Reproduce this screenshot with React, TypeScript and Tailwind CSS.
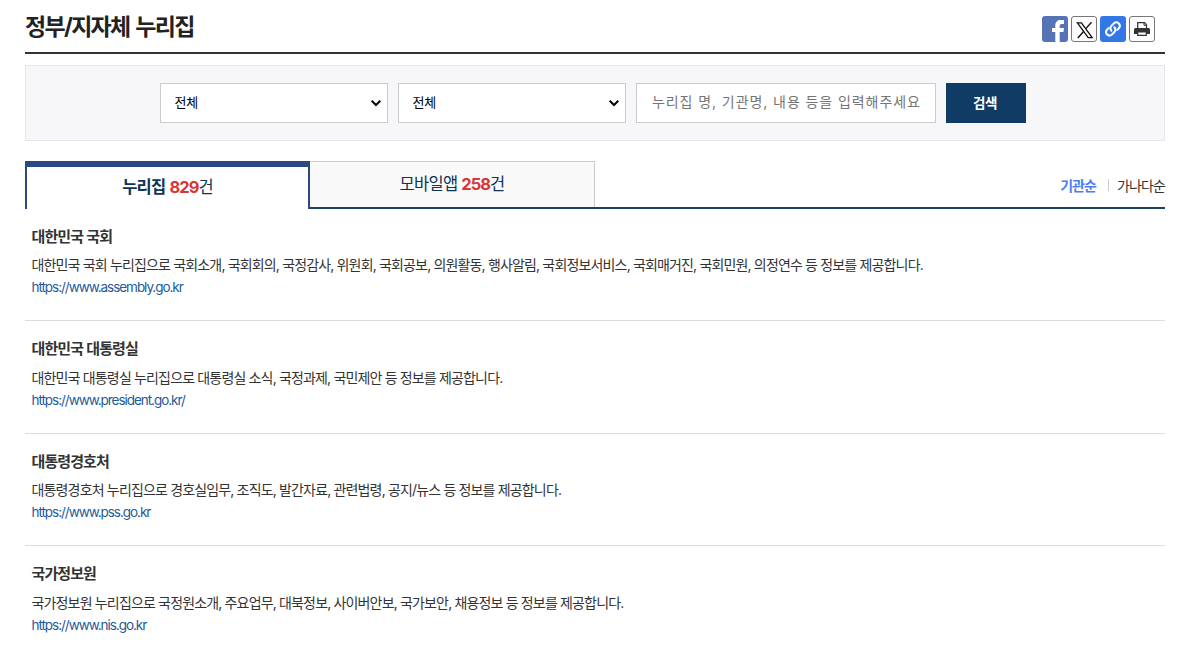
type Site = {
  name: string
  desc: string
  url: string
}

const sites: Site[] = [
  {
    name: '대한민국 국회',
    desc: '대한민국 국회 누리집으로 국회소개, 국회회의, 국정감사, 위원회, 국회공보, 의원활동, 행사알림, 국회정보서비스, 국회매거진, 국회민원, 의정연수 등 정보를 제공합니다.',
    url: 'https://www.assembly.go.kr',
  },
  {
    name: '대한민국 대통령실',
    desc: '대한민국 대통령실 누리집으로 대통령실 소식, 국정과제, 국민제안 등 정보를 제공합니다.',
    url: 'https://www.president.go.kr/',
  },
  {
    name: '대통령경호처',
    desc: '대통령경호처 누리집으로 경호실임무, 조직도, 발간자료, 관련법령, 공지/뉴스 등 정보를 제공합니다.',
    url: 'https://www.pss.go.kr',
  },
  {
    name: '국가정보원',
    desc: '국가정보원 누리집으로 국정원소개, 주요업무, 대북정보, 사이버안보, 국가보안, 채용정보 등 정보를 제공합니다.',
    url: 'https://www.nis.go.kr',
  },
]

function ShareButtons() {
  return (
    <div className="flex gap-[3px]">
      <button aria-label="Facebook" className="h-[26px] w-[26px] overflow-hidden rounded-[3px] bg-[#5673b5]">
        <svg viewBox="0 0 26 26" className="block h-full w-full" fill="#fff">
          <path d="M13.3 26V16H10V12H13.3V9.5C13.3 6 15.4 4 18.5 4H22V8H19.8C18.3 8 17.7 8.8 17.7 10V12H22L21.4 16H17.7V26Z" />
        </svg>
      </button>
      <button aria-label="X" className="h-[26px] w-[26px] rounded-[3px] border border-[#777] bg-white">
        <svg viewBox="0 0 24 24" className="block h-full w-full">
          <path d="M5.4 5.9H9.4L20.2 20.6H16.2Z" fill="none" stroke="#111" strokeWidth="1.3" />
          <path d="M19.5 5.3L13.6 11.9M11.8 14.3L5.8 21" stroke="#111" strokeWidth="1.4" />
        </svg>
      </button>
      <button aria-label="링크 복사" className="h-[26px] w-[26px] rounded-[3px] bg-[#3178e6]">
        <svg
          viewBox="0 0 26 26"
          className="block h-full w-full"
          fill="none"
          stroke="#fff"
          strokeWidth="2"
          strokeLinecap="round"
        >
          <path d="M11.4 14.8A3.5 3.5 0 0 1 11.4 9.9L14.2 7.1A3.5 3.5 0 0 1 19.1 12L17.2 13.9" />
          <path d="M14.4 11.2A3.5 3.5 0 0 1 14.4 16.1L11.7 18.8A3.5 3.5 0 0 1 6.8 13.9L8.7 12" />
        </svg>
      </button>
      <button aria-label="인쇄" className="h-[26px] w-[26px] rounded-[3px] border border-[#777] bg-white">
        <svg viewBox="0 0 24 24" className="block h-full w-full">
          <path d="M7.7 11V5.7H14.5L16.5 7.7V11" fill="#fff" stroke="#333" strokeWidth="1.2" />
          <path d="M14 5.5V8.3H16.5" fill="none" stroke="#333" />
          <path d="M5.5 11H18.5A1.5 1.5 0 0 1 20 12.5V17H4V12.5A1.5 1.5 0 0 1 5.5 11Z" fill="#333" />
          <path d="M7.7 15H16.3V18.4H7.7Z" fill="#fff" stroke="#333" strokeWidth="1.2" />
        </svg>
      </button>
    </div>
  )
}

function FilterSelect({ label }: { label: string }) {
  return (
    <div className="relative h-10 w-[228px]">
      <select
        aria-label={label}
        className="h-full w-full appearance-none border border-[#ccc] bg-white pl-[13.5px] text-[13px] tracking-[-0.3px] text-black"
      >
        <option>전체</option>
      </select>
      <svg viewBox="0 0 12 8" className="pointer-events-none absolute top-4 right-[6.5px] h-2 w-3">
        <path d="M1.7 1.7L6 6L10.3 1.7" fill="none" stroke="#000" strokeWidth="2" />
      </svg>
    </div>
  )
}

function SiteItem({ site }: { site: Site }) {
  return (
    <li className="h-[112.5px] border-b border-[#ddd] pt-4 pl-[6.5px]">
      <h2 className="text-[15px] leading-6 font-bold tracking-[-0.9px] text-[#333] [word-spacing:0.5px]">
        {site.name}
      </h2>
      <p className="mt-[5.5px] text-[14px] leading-[22px] tracking-[-0.84px] whitespace-nowrap text-[#333]">
        {site.desc}
      </p>
      <a href={site.url} className="block text-[13.5px] leading-[22px] tracking-[-1.04px] text-[#1f5a99]">
        {site.url}
      </a>
    </li>
  )
}

export default function App() {
  return (
    <div className="h-[654px] overflow-hidden bg-white pr-[23px] pl-[25px] font-['Inter','Noto_Sans_CJK_KR',sans-serif]">
      <header className="flex h-[54px] justify-between border-b-2 border-[#333] pr-2.5">
        <h1 className="pt-[11px] text-[23px] leading-8 font-bold tracking-[-1.7px] text-[#222] [word-spacing:2px]">
          정부/지자체 누리집
        </h1>
        <div className="pt-4">
          <ShareButtons />
        </div>
      </header>

      <form className="mt-[11px] flex h-[76px] justify-center gap-2.5 border border-[#e5e5ea] bg-[#f7f7fa] pt-[17px] pr-1">
        <FilterSelect label="기관 유형" />
        <FilterSelect label="기관" />
        <input
          type="text"
          placeholder="누리집 명, 기관명, 내용 등을 입력해주세요"
          className="h-10 w-[300px] border border-[#ccc] bg-white px-[15px] pb-[3px] text-[14px] tracking-[0.92px] placeholder:text-[#757575]"
        />
        <button
          type="button"
          className="h-10 w-20 bg-[#0f3b64] pr-0.5 text-[13.5px] font-bold tracking-[-0.5px] text-white"
        >
          검색
        </button>
      </form>

      <div className="mt-5 flex h-12">
        <button className="w-[285px] border-x-2 border-t-[6px] border-[#29497f] bg-white pb-0.5 text-[16.5px] tracking-[-0.7px] text-[#0f3456]">
          <strong>누리집</strong> <strong className="tracking-[-1px] text-[#d93636]">829</strong>건
        </button>
        <div className="flex flex-1 justify-between border-b-2 border-[#1d3f66]">
          <button className="w-[285px] border-t border-r border-[#ccc] bg-[#f9f9f9] text-[16.5px] tracking-[-0.7px] text-[#0f3456]">
            모바일앱 <strong className="tracking-[-1px] text-[#d93636]">258</strong>건
          </button>
          <div className="flex items-center pt-0.5 text-[14px] tracking-[-0.9px]">
            <button className="font-bold text-[#4f7df0]">기관순</button>
            <span className="mr-2 ml-3 h-3 w-px bg-[#ccc]" />
            <button className="text-[#333]">가나다순</button>
          </div>
        </div>
      </div>

      <ul className="-mt-[0.5px]">
        {sites.map((site) => (
          <SiteItem key={site.url} site={site} />
        ))}
      </ul>
    </div>
  )
}
